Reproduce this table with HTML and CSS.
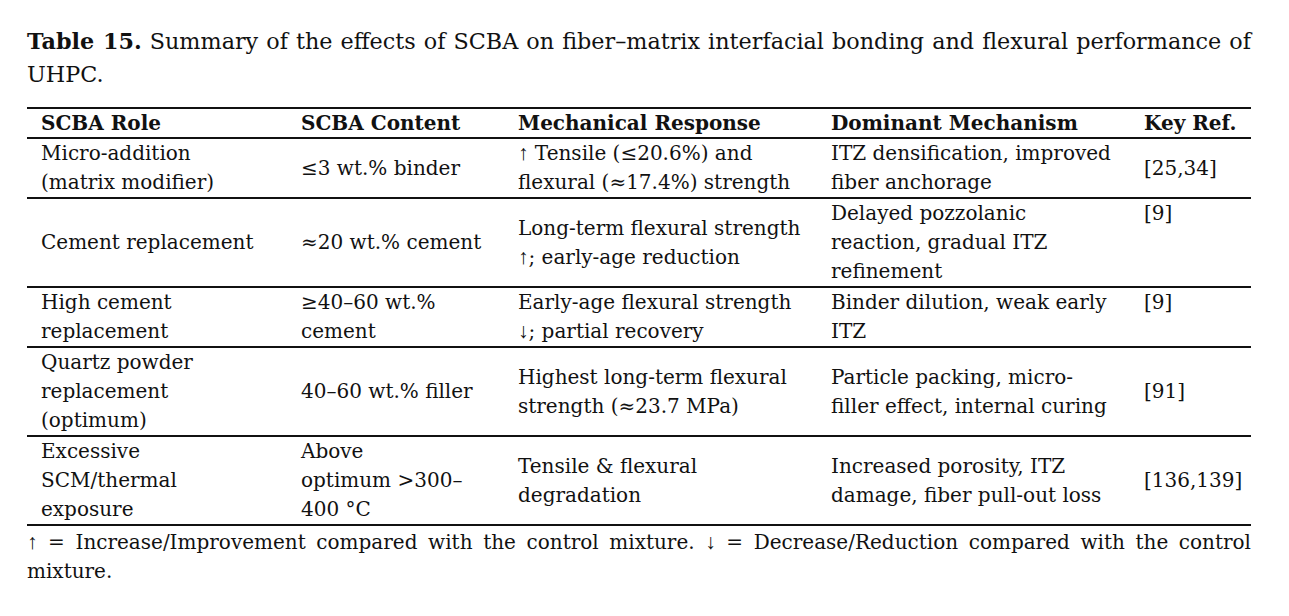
FILE: index.html
```html
<!DOCTYPE html>
<html lang="en">
<head>
<meta charset="utf-8">
<title>Table 15</title>
<link rel="stylesheet" href="styles.css">
</head>
<body>
<div class="page">
  <p class="caption"><b>Table 15.</b> Summary of the effects of SCBA on fiber–matrix interfacial bonding and flexural performance of UHPC.</p>
  <table class="tbl">
    <colgroup>
      <col class="c1"><col class="c2"><col class="c3"><col class="c4"><col class="c5">
    </colgroup>
    <thead>
      <tr>
        <th>SCBA Role</th>
        <th>SCBA Content</th>
        <th>Mechanical Response</th>
        <th>Dominant Mechanism</th>
        <th>Key Ref.</th>
      </tr>
    </thead>
    <tbody>
      <tr>
        <td>Micro-addition<br>(matrix modifier)</td>
        <td>≤3 wt.% binder</td>
        <td><span class="ar">↑</span> Tensile (≤20.6%) and<br>flexural (≈17.4%) strength</td>
        <td>ITZ densification, improved<br>fiber anchorage</td>
        <td>[25,34]</td>
      </tr>
      <tr>
        <td>Cement replacement</td>
        <td>≈20 wt.% cement</td>
        <td>Long-term flexural strength<br><span class="ar">↑</span>; early-age reduction</td>
        <td>Delayed pozzolanic<br>reaction, gradual ITZ<br>refinement</td>
        <td class="top">[9]</td>
      </tr>
      <tr>
        <td>High cement<br>replacement</td>
        <td>≥40–60 wt.%<br>cement</td>
        <td>Early-age flexural strength<br><span class="ar">↓</span>; partial recovery</td>
        <td>Binder dilution, weak early<br>ITZ</td>
        <td class="top">[9]</td>
      </tr>
      <tr>
        <td>Quartz powder<br>replacement<br>(optimum)</td>
        <td>40–60 wt.% filler</td>
        <td>Highest long-term flexural<br>strength (≈23.7 MPa)</td>
        <td>Particle packing, micro-<br>filler effect, internal curing</td>
        <td>[91]</td>
      </tr>
      <tr>
        <td>Excessive<br>SCM/thermal<br>exposure</td>
        <td>Above<br>optimum &gt;300–<br>400 °C</td>
        <td>Tensile &amp; flexural<br>degradation</td>
        <td>Increased porosity, ITZ<br>damage, fiber pull-out loss</td>
        <td>[136,139]</td>
      </tr>
    </tbody>
  </table>
  <p class="note"><span class="ar">↑</span> = Increase/Improvement compared with the control mixture. <span class="ar">↓</span> = Decrease/Reduction compared with the control mixture.</p>
</div>
</body>
</html>
```

FILE: styles.css
```css
html, body {
  margin: 0;
  padding: 0;
  background: #ffffff;
}

body {
  font-family: "DejaVu Serif", "Liberation Serif", serif;
  color: #111111;
}

.page {
  width: 1224px;
  padding: 25px 0 0 27px;
}

.caption {
  margin: 0;
  font-size: 22.3px;
  line-height: 33px;
  text-align: justify;
}

.caption b {
  font-weight: bold;
}

.tbl {
  margin-top: 16px;
  width: 1224px;
  border-collapse: collapse;
  table-layout: fixed;
  font-size: 20px;
}

.c1 { width: 260px; }
.c2 { width: 217px; }
.c3 { width: 313px; }
.c4 { width: 313px; }
.c5 { width: 121px; }

.tbl th,
.tbl td {
  padding: 0 4px 0 14px;
  text-align: left;
  vertical-align: middle;
  white-space: nowrap;
}

.tbl th {
  font-weight: bold;
  line-height: 28px;
  border-top: 2px solid #111;
  border-bottom: 2px solid #111;
}

.tbl td {
  line-height: 29px;
  border-bottom: 2px solid #111;
}

.tbl td.top {
  vertical-align: top;
}

.ar {
  font-family: "Liberation Sans", sans-serif;
  font-size: 21px;
  line-height: 0;
}

.note {
  margin: 2px 0 0 0;
  font-size: 20px;
  line-height: 29px;
  text-align: justify;
}
```
